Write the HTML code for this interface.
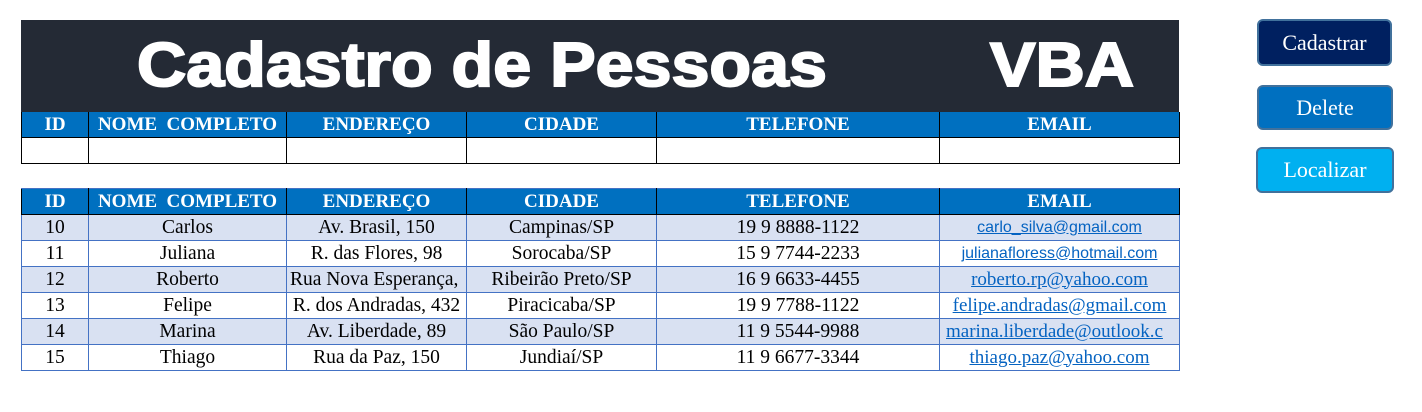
<!DOCTYPE html>
<html><head><meta charset="utf-8"><style>
body{margin:0;background:#fff;width:1422px;height:412px;position:relative;overflow:hidden;font-family:"Liberation Serif",serif;}
.title{position:absolute;left:21px;top:20px;width:1158px;height:92px;background:#242a35;color:#fff;font-family:"Liberation Sans",sans-serif;font-weight:bold;font-size:62px;-webkit-text-stroke:2px #fff;}
.title span{position:absolute;top:10px;line-height:72px;transform-origin:0 0;transform:scaleX(1.1);}
table{position:absolute;left:21px;border-collapse:collapse;table-layout:fixed;width:1159px;}
td,th{padding:0;text-align:center;font-size:19.5px;height:25px;line-height:24px;white-space:nowrap;overflow:hidden;}
th{background:#0070c0;color:#fff;font-weight:bold;font-size:19px;}
.t1 th{border-left:1px solid #000;border-right:1px solid #000;}
.t1 td{border:1px solid #000;}
.t2 th{border-left:1px solid #000;border-right:1px solid #000;border-bottom:1px solid #000;}
.t2 tr:first-child th{border-top:1px solid #4472c4}
.t2 td{border:1px solid #4472c4;}
.t2 tr.a td{background:#d9e1f2;}
.e{color:#0563c1;text-decoration:underline;font-size:19px;}
.s{font-family:"Liberation Sans",sans-serif;font-size:16px;}
.btn{position:absolute;border:2px solid #41719c;border-radius:6px;color:#fff;font-size:22px;text-align:center;box-sizing:border-box;}
</style></head><body>
<div class="title"><span style="left:116px">Cadastro de Pessoas</span><span style="left:969px">VBA</span></div>
<table class="t1" style="top:112px">
<colgroup><col style="width:67px"><col style="width:198px"><col style="width:180px"><col style="width:190px"><col style="width:283px"><col style="width:240px"></colgroup>
<tr><th>ID</th><th>NOME&nbsp; COMPLETO</th><th>ENDEREÇO</th><th>CIDADE</th><th>TELEFONE</th><th>EMAIL</th></tr>
<tr><td></td><td></td><td></td><td></td><td></td><td></td></tr>
</table>
<table class="t2" style="top:188px">
<colgroup><col style="width:67px"><col style="width:198px"><col style="width:180px"><col style="width:190px"><col style="width:283px"><col style="width:240px"></colgroup>
<tr><th>ID</th><th>NOME&nbsp; COMPLETO</th><th>ENDEREÇO</th><th>CIDADE</th><th>TELEFONE</th><th>EMAIL</th></tr>
<tr class="a"><td>10</td><td>Carlos</td><td>Av. Brasil, 150</td><td>Campinas/SP</td><td>19 9 8888-1122</td><td class="e s">carlo_silva@gmail.com</td></tr>
<tr><td>11</td><td>Juliana</td><td>R. das Flores, 98</td><td>Sorocaba/SP</td><td>15 9 7744-2233</td><td class="e s">julianafloress@hotmail.com</td></tr>
<tr class="a"><td>12</td><td>Roberto</td><td style="text-align:left;padding-left:3px">Rua Nova Esperança,</td><td>Ribeirão Preto/SP</td><td>16 9 6633-4455</td><td class="e">roberto.rp@yahoo.com</td></tr>
<tr><td>13</td><td>Felipe</td><td>R. dos Andradas, 432</td><td>Piracicaba/SP</td><td>19 9 7788-1122</td><td class="e">felipe.andradas@gmail.com</td></tr>
<tr class="a"><td>14</td><td>Marina</td><td>Av. Liberdade, 89</td><td>São Paulo/SP</td><td>11 9 5544-9988</td><td class="e" style="text-align:left;padding-left:6px">marina.liberdade@outlook.c</td></tr>
<tr><td>15</td><td>Thiago</td><td>Rua da Paz, 150</td><td>Jundiaí/SP</td><td>11 9 6677-3344</td><td class="e">thiago.paz@yahoo.com</td></tr>
</table>
<div class="btn" style="left:1257px;top:19px;width:135px;height:47px;line-height:43px;background:#002060">Cadastrar</div>
<div class="btn" style="left:1257px;top:85px;width:136px;height:45px;line-height:41px;background:#0070c0">Delete</div>
<div class="btn" style="left:1256px;top:147px;width:138px;height:46px;line-height:42px;background:#00b0f0">Localizar</div>
</body></html>
